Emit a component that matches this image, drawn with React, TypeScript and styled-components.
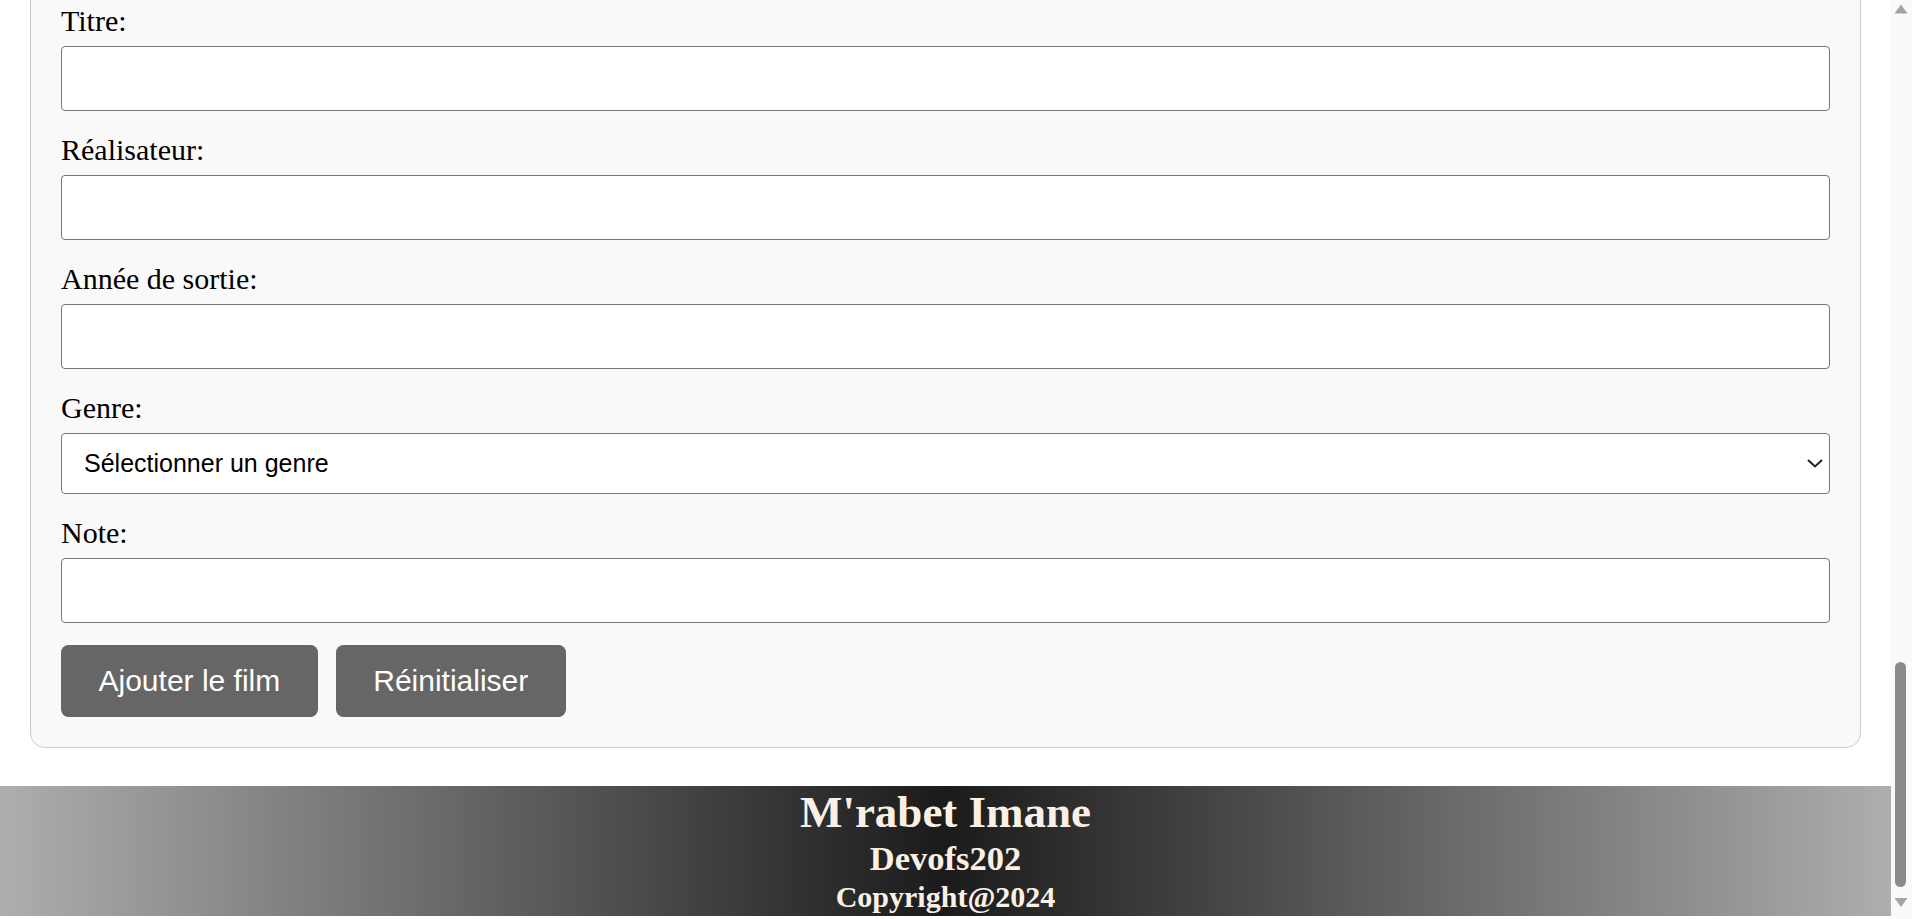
import { useLayoutEffect, useRef, useState } from "react";
import styled, { createGlobalStyle } from "styled-components";

const GlobalStyle = createGlobalStyle`
  html, body {
    margin: 0;
    height: 100%;
    overflow: hidden;
    background: #fff;
  }
  #root {
    height: 100%;
  }
`;

const Screen = styled.div`
  display: flex;
  height: 100vh;
  background: #fff;
  font-family: "Liberation Serif", "Times New Roman", serif;
`;

const Viewport = styled.div`
  flex: 1;
  min-width: 0;
  overflow-y: auto;
  scrollbar-width: none;

  &::-webkit-scrollbar {
    display: none;
  }
`;

const Content = styled.div`
  display: flex;
  flex-direction: column;
  padding-bottom: 3px;
`;

/* the window's scrollbar, drawn since the page is shown scrolled down */
const ScrollRail = styled.div`
  width: 21px;
  flex-shrink: 0;
  display: flex;
  flex-direction: column;
  background: #fafafa;
`;

const RailTrack = styled.div`
  flex: 1;
  display: flex;
  flex-direction: column;
  justify-content: flex-end;
`;

const RailThumb = styled.div`
  width: 11px;
  height: 225px;
  margin-left: 4px;
  border-radius: 6px;
  background: #8b8b8b;
`;

const FormCard = styled.form`
  margin: 0 30px 37.5px;
  padding: 30px;
  background: #f9f9f9;
  border: 1px solid #ccc;
  border-radius: 15px;
`;

const Field = styled.div`
  margin-bottom: 22.5px;
`;

const Label = styled.label`
  display: block;
  margin-bottom: 7px;
  font-size: 30px;
  line-height: 34.5px;
  color: #000;
`;

const TextInput = styled.input`
  display: block;
  width: 100%;
  height: 65px;
  box-sizing: border-box;
  padding: 0 22px;
  border: 1px solid #767676;
  border-radius: 4px;
  background: #fff;
  font-family: "Liberation Sans", Arial, sans-serif;
  font-size: 25px;
  color: #000;
  outline: none;
`;

const SelectWrap = styled.div`
  position: relative;
`;

const Select = styled.select`
  display: block;
  width: 100%;
  height: 61px;
  box-sizing: border-box;
  padding: 0 40px 0 22px;
  border: 1px solid #767676;
  border-radius: 4px;
  background: #fff;
  font-family: "Liberation Sans", Arial, sans-serif;
  font-size: 25px;
  color: #000;
  appearance: none;
  outline: none;
`;

const Chevron = styled.svg`
  position: absolute;
  right: 7px;
  top: 50%;
  margin-top: -4px;
  pointer-events: none;
`;

const Actions = styled.div`
  display: flex;
  gap: 18px;
`;

const ActionButton = styled.button`
  padding: 18.75px 37.5px;
  border: none;
  border-radius: 7.5px;
  background: #666;
  color: #fff;
  font-family: "Liberation Sans", Arial, sans-serif;
  font-size: 30px;
  line-height: 34.5px;
  cursor: pointer;
`;

const Footer = styled.footer`
  display: flex;
  flex-direction: column;
  align-items: center;
  text-align: center;
  color: #faf0e6;
  font-weight: bold;
  background: linear-gradient(to right, #aeaeae, #1b1b1b 50%, #aeaeae);
`;

const FooterName = styled.h2`
  margin: 0;
  font-size: 45px;
  line-height: 52px;
`;

const FooterCourse = styled.h3`
  margin: 0;
  font-size: 34.5px;
  line-height: 40px;
`;

const FooterCopy = styled.p`
  margin: 0;
  font-size: 30px;
  line-height: 38px;
`;

const genres = ["Action", "Animation", "Comédie", "Drame", "Horreur", "Science-fiction", "Thriller"];

const emptyForm = { titre: "", realisateur: "", annee: "", genre: "", note: "" };

export default function App() {
  const viewRef = useRef<HTMLDivElement>(null);
  const [form, setForm] = useState(emptyForm);

  // the page is seen scrolled to its bottom
  useLayoutEffect(() => {
    const el = viewRef.current;
    if (el) el.scrollTop = el.scrollHeight;
  }, []);

  const update = (key: keyof typeof emptyForm) => (e: any) =>
    setForm({ ...form, [key]: e.target.value });

  return (
    <>
      <GlobalStyle />
      <Screen>
        <Viewport ref={viewRef}>
          <Content>
            <FormCard onSubmit={(e) => e.preventDefault()}>
              <Field>
                <Label htmlFor="titre">Titre:</Label>
                <TextInput id="titre" value={form.titre} onChange={update("titre")} />
              </Field>
              <Field>
                <Label htmlFor="realisateur">Réalisateur:</Label>
                <TextInput id="realisateur" value={form.realisateur} onChange={update("realisateur")} />
              </Field>
              <Field>
                <Label htmlFor="annee">Année de sortie:</Label>
                <TextInput id="annee" value={form.annee} onChange={update("annee")} />
              </Field>
              <Field>
                <Label htmlFor="genre">Genre:</Label>
                <SelectWrap>
                  <Select id="genre" value={form.genre} onChange={update("genre")}>
                    <option value="">Sélectionner un genre</option>
                    {genres.map((g) => (
                      <option key={g} value={g}>{g}</option>
                    ))}
                  </Select>
                  <Chevron width="16" height="9" viewBox="0 0 16 9">
                    <polyline points="1,1 8,7.5 15,1" fill="none" stroke="#222" strokeWidth="2" />
                  </Chevron>
                </SelectWrap>
              </Field>
              <Field>
                <Label htmlFor="note">Note:</Label>
                <TextInput id="note" value={form.note} onChange={update("note")} />
              </Field>
              <Actions>
                <ActionButton type="submit">Ajouter le film</ActionButton>
                <ActionButton type="button" onClick={() => setForm(emptyForm)}>
                  Réinitialiser
                </ActionButton>
              </Actions>
            </FormCard>

            <Footer>
              <FooterName>M'rabet Imane</FooterName>
              <FooterCourse>Devofs202</FooterCourse>
              <FooterCopy>Copyright@2024</FooterCopy>
            </Footer>
          </Content>
        </Viewport>

        <ScrollRail>
          <svg width="21" height="17" viewBox="0 0 21 17">
            <polygon points="3.5,13.5 10,4.5 16.5,13.5" fill="#a3a3a3" />
          </svg>
          <RailTrack>
            <RailThumb />
          </RailTrack>
          <svg width="21" height="32" viewBox="0 0 21 32">
            <polygon points="3.5,11 16.5,11 10,20" fill="#a3a3a3" />
          </svg>
        </ScrollRail>
      </Screen>
    </>
  );
}
